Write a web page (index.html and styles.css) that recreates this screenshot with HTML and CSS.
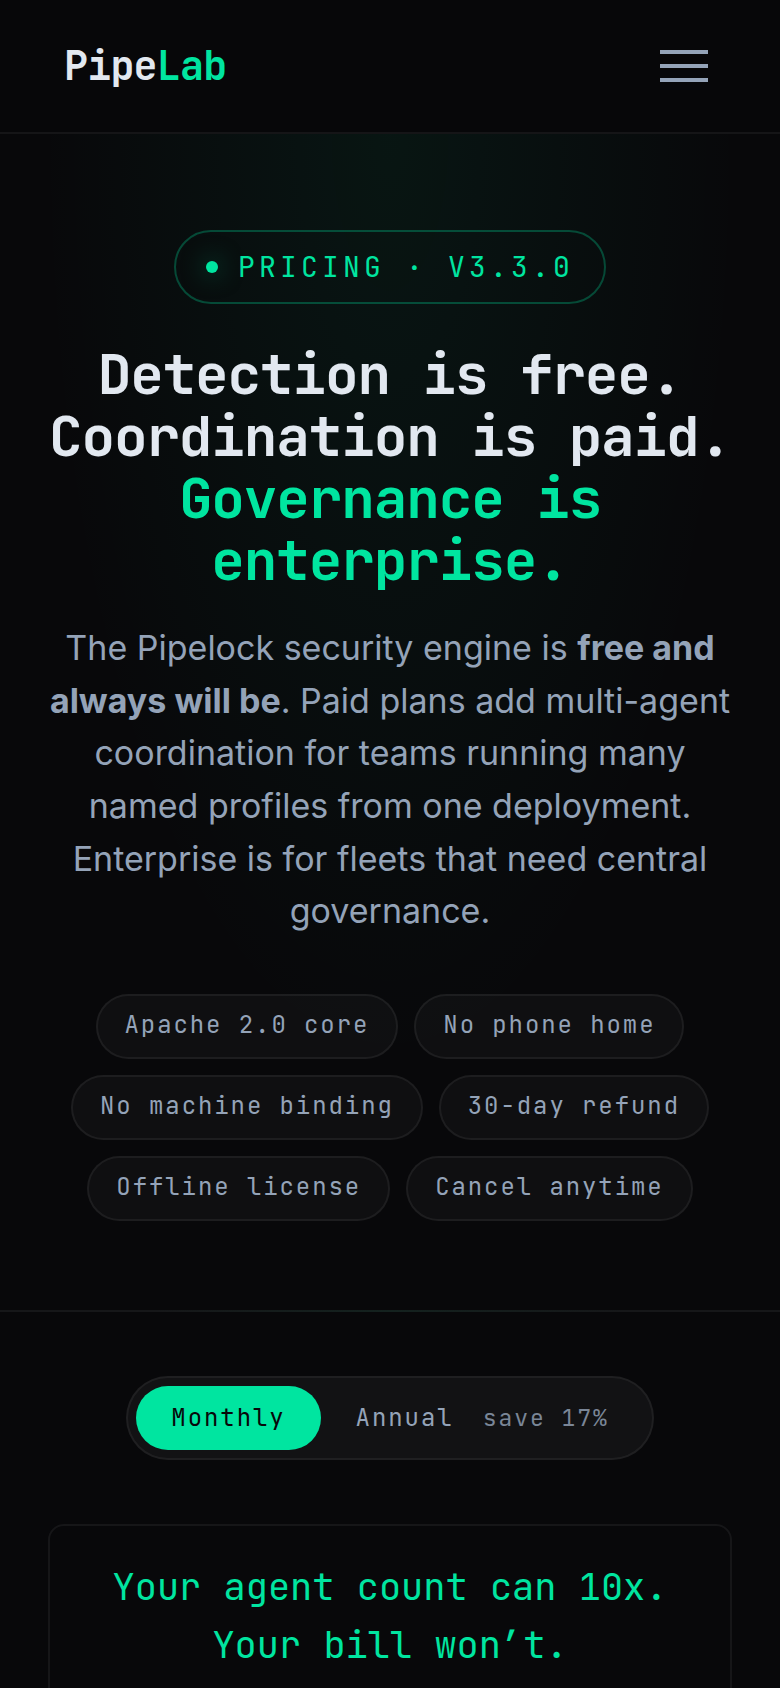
FILE: index.html
```html
<!DOCTYPE html>
<html lang="en">
<head>
  <meta charset="utf-8">
  <meta name="viewport" content="width=device-width, initial-scale=1">
  <title>Pricing · PipeLab</title>
  <link rel="stylesheet" href="styles.css">
</head>
<body>
  <header class="site-header">
    <a class="logo" href="#">Pipe<span class="accent">Lab</span></a>
    <button class="menu-button" type="button" aria-label="Menu">
      <span class="menu-bar"></span>
      <span class="menu-bar"></span>
      <span class="menu-bar"></span>
    </button>
  </header>
  <main>
    <section class="hero">
      <p class="badge"><span class="badge-dot"></span>Pricing · v3.3.0</p>
      <h1 class="title">Detection is free.<br>Coordination is paid.<br><span class="accent">Governance is enterprise.</span></h1>
      <p class="lead">The Pipelock security engine is <strong>free and always will be</strong>. Paid plans add multi-agent coordination for teams running many named profiles from one deployment. Enterprise is for fleets that need central governance.</p>
      <ul class="chips">
        <li class="chip">Apache 2.0 core</li>
        <li class="chip">No phone home</li>
        <li class="chip">No machine binding</li>
        <li class="chip">30-day refund</li>
        <li class="chip">Offline license</li>
        <li class="chip">Cancel anytime</li>
      </ul>
    </section>
    <section class="plans">
      <div class="toggle" role="group" aria-label="Billing period">
        <button class="toggle-option is-active" type="button" aria-pressed="true">Monthly</button>
        <button class="toggle-option" type="button" aria-pressed="false">Annual <span class="saving">save 17%</span></button>
      </div>
      <div class="callout">
        <p class="callout-text">Your agent count can 10x. Your bill won’t.</p>
      </div>
    </section>
  </main>
</body>
</html>
```
FILE: styles.css
```css
:root {
  --bg: #08080a;
  --green: #00e5a0;
  --text: #e2e8f0;
  --muted: #94a3b8;
  --line: rgba(255, 255, 255, 0.06);
  --mono: "JetBrains Mono", "DejaVu Sans Mono", "Liberation Mono", monospace;
  --sans: Inter, "Liberation Sans", sans-serif;
}

* {
  box-sizing: border-box;
}

body {
  margin: 0;
  background: var(--bg);
  color: var(--muted);
  font-family: var(--sans);
}

.accent {
  color: var(--green);
}

.site-header {
  display: flex;
  align-items: center;
  justify-content: space-between;
  padding: 38px 64px;
  background: #070709;
  border-bottom: 2px solid var(--line);
}

.logo {
  color: var(--text);
  font: 700 40px/56px var(--mono);
  letter-spacing: -0.02em;
  text-decoration: none;
}

.menu-button {
  display: flex;
  flex-direction: column;
  gap: 10px;
  padding: 8px;
  border: 0;
  background: none;
}

.menu-bar {
  width: 48px;
  height: 4px;
  background: var(--muted);
}

.hero {
  display: flex;
  flex-direction: column;
  align-items: center;
  padding: 96px 40px 89px;
  text-align: center;
  background: radial-gradient(ellipse 45% 80% at 50% 0, rgba(0, 229, 160, 0.06), transparent);
  border-bottom: 2px solid;
  border-image: linear-gradient(90deg, #161719 20%, #14221f 50%, #161719 80%) 1;
}

.badge {
  display: flex;
  align-items: center;
  gap: 20px;
  margin: 0 0 39px;
  padding: 17px 30px;
  border: 2px solid rgba(0, 229, 160, 0.28);
  border-radius: 37px;
  color: var(--green);
  font: 400 28px/36px var(--mono);
  letter-spacing: 0.15em;
  text-transform: uppercase;
}

.badge-dot {
  width: 12px;
  height: 12px;
  border-radius: 50%;
  background: var(--green);
  box-shadow: 0 0 24px rgba(0, 229, 160, 0.5);
}

.title {
  margin: 0 0 31px;
  color: var(--text);
  font: 700 56px/62px var(--mono);
  letter-spacing: -0.02em;
}

.lead {
  margin: 0 0 56px;
  font-size: 34px;
  line-height: 1.55;
}

.lead strong {
  font-weight: 700;
}

.chips {
  display: flex;
  flex-wrap: wrap;
  justify-content: center;
  gap: 16px;
  margin: 0;
  padding: 0;
  list-style: none;
}

.chip {
  padding: 13px 27px 16px;
  border: 2px solid var(--line);
  border-radius: 33px;
  background: rgba(255, 255, 255, 0.03);
  font: 400 24px/32px var(--mono);
  letter-spacing: 0.08em;
}

.plans {
  display: flex;
  flex-direction: column;
  align-items: center;
  padding: 64px 48px;
}

.toggle {
  display: flex;
  margin-bottom: 64px;
  padding: 8px;
  border: 2px solid var(--line);
  border-radius: 42px;
  background: #121214;
}

.toggle-option {
  padding: 16px 35px;
  border: 0;
  border-radius: 32px;
  background: none;
  color: var(--muted);
  font: 400 24px/32px var(--mono);
  letter-spacing: 0.08em;
}

.toggle-option.is-active {
  background: var(--green);
  color: var(--bg);
}

.saving {
  margin-left: 13px;
  font-size: 23px;
  opacity: 0.8;
}

.callout {
  width: 100%;
  padding: 32px 40px;
  border: 2px solid var(--line);
  border-radius: 16px;
  text-align: center;
}

.callout-text {
  margin: 0;
  color: var(--green);
  font: 400 37px/58px var(--mono);
}
```
